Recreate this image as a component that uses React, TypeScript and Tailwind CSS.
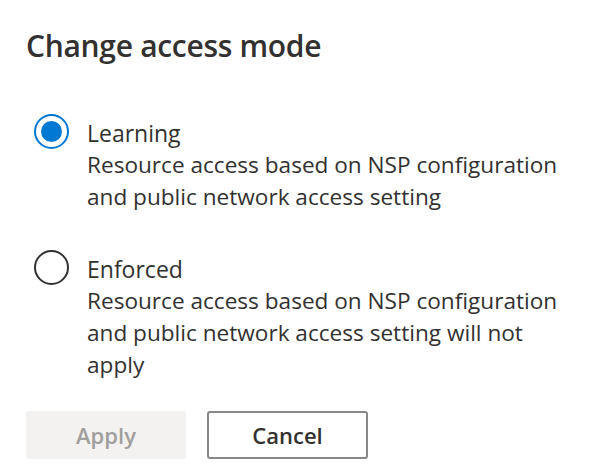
import { useState } from "react";

const options = [
  {
    id: "learning",
    label: "Learning",
    description: "Resource access based on NSP configuration and public network access setting",
  },
  {
    id: "enforced",
    label: "Enforced",
    description:
      "Resource access based on NSP configuration and public network access setting will not apply",
  },
];

export default function App() {
  const [mode, setMode] = useState("learning");

  return (
    <div
      className="w-[594px] h-[470px] bg-white text-[#323130] overflow-hidden"
      style={{ fontFamily: '"Open Sans", "Noto Sans", sans-serif' }}
    >
      <div className="pl-[26px] pt-[22px]">
        <h1 className="text-[30px] leading-[48px] font-semibold tracking-[-0.3px]">Change access mode</h1>

        <div className="mt-[47px] flex flex-col gap-[40px]">
          {options.map((opt) => {
            const checked = mode === opt.id;
            return (
              <label key={opt.id} className="flex items-start cursor-pointer" onClick={() => setMode(opt.id)}>
                <span
                  className={
                    checked
                      ? "-mt-[3px] ml-[8px] w-[35px] h-[35px] rounded-full border-2 border-[#0078d4] flex items-center justify-center shrink-0"
                      : "-mt-[3px] ml-[8px] w-[35px] h-[35px] rounded-full border-2 border-[#323130] flex items-center justify-center shrink-0"
                  }
                >
                  {checked && <span className="w-[21px] h-[21px] rounded-full bg-[#0078d4]" />}
                </span>
                <div className="ml-[18px] w-[485px]">
                  <div className="text-[23px] leading-[32px]">{opt.label}</div>
                  <div className="text-[22.6px] leading-[32px]">{opt.description}</div>
                </div>
              </label>
            );
          })}
        </div>

        <div className="mt-[30px] flex gap-[21px]">
          <button
            disabled
            className="w-[160px] h-[48px] rounded-[3px] bg-[#f3f2f1] text-[#a19f9d] text-[22px] font-semibold"
          >
            Apply
          </button>
          <button className="w-[161px] h-[48px] rounded-[3px] border-2 border-[#8a8886] bg-white text-[#323130] text-[22px] font-semibold">
            Cancel
          </button>
        </div>
      </div>
    </div>
  );
}
